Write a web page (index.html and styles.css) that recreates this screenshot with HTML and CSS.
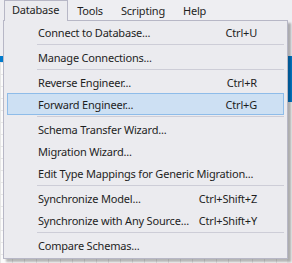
FILE: index.html
```html
<!DOCTYPE html>
<html lang="en">
<head>
  <meta charset="UTF-8" />
  <title>Database menu</title>
  <link rel="stylesheet" href="styles.css">
</head>
<body>

  <div class="menubar">
    <div class="menu-title open">Database</div>
    <div class="menu-title">Tools</div>
    <div class="menu-title">Scripting</div>
    <div class="menu-title">Help</div>
  </div>
  <div class="toolbar"></div>
  <div class="docbar"></div>
  <div class="workspace">
    <div class="canvas"></div>
    <div class="side"><div class="side-top"></div></div>
  </div>

  <div class="dropdown">
    <div class="item"><span>Connect to Database...</span><span class="key">Ctrl+U</span></div>
    <div class="sep"></div>
    <div class="item"><span>Manage Connections...</span></div>
    <div class="sep"></div>
    <div class="item"><span>Reverse Engineer...</span><span class="key">Ctrl+R</span></div>
    <div class="item active"><span>Forward Engineer...</span><span class="key">Ctrl+G</span></div>
    <div class="sep"></div>
    <div class="item"><span>Schema Transfer Wizard...</span></div>
    <div class="item"><span>Migration Wizard...</span></div>
    <div class="item"><span>Edit Type Mappings for Generic Migration...</span></div>
    <div class="sep"></div>
    <div class="item"><span>Synchronize Model...</span><span class="key">Ctrl+Shift+Z</span></div>
    <div class="item"><span>Synchronize with Any Source...</span><span class="key">Ctrl+Shift+Y</span></div>
    <div class="sep"></div>
    <div class="item"><span>Compare Schemas...</span></div>
  </div>

</body>
</html>
```

FILE: styles.css
```css
body {
  margin: 0;
  width: 292px;
  height: 263px;
  overflow: hidden;
  display: flex;
  flex-direction: column;
  background-color: #eeeef2;
  font-family: "Noto Sans", "Open Sans", sans-serif;
  font-size: 11px;
  letter-spacing: -0.2px;
  color: #1e1e1e;
}
.menubar {
  height: 20px;
  display: flex;
  align-items: flex-end;
  padding-left: 4px;
}
.menu-title {
  height: 19px;
  line-height: 18px;
  padding: 0 8px;
  border: 1px solid transparent;
  border-bottom: none;
  box-sizing: border-box;
}
.menu-title.open {
  position: relative;
  z-index: 3;
  height: 21px;
  margin-bottom: -1px;
  padding: 0 8px 0 7px;
  background-color: #ebebef;
  border-color: #b7b7c6;
}
.toolbar {
  height: 36px;
}
.docbar {
  height: 6px;
  background-color: #007acc;
}
.workspace {
  flex: 1;
  display: flex;
}
.canvas {
  flex: 1;
  background-color: #fbfbfb;
  background-image:
    linear-gradient(to right, #e6e6e6 1px, transparent 1px),
    linear-gradient(to bottom, #e6e6e6 1px, transparent 1px);
  background-size: 12px 12px;
}
.side {
  width: 5px;
  background-color: #f0f0f0;
}
.side-top {
  height: 40px;
  background-color: #007acc;
}
.dropdown {
  position: absolute;
  left: 3px;
  top: 20px;
  width: 285px;
  height: 239px;
  box-sizing: border-box;
  border: 1px solid #b7b7c6;
  background-color: #ebebef;
  box-shadow: 3px 3px 2px rgba(0, 0, 0, 0.28);
  z-index: 2;
}
.item {
  height: 22px;
  margin: 0 3px;
  padding: 0 26px 0 30px;
  border: 1px solid transparent;
  box-sizing: border-box;
  display: flex;
  align-items: center;
  justify-content: space-between;
  white-space: nowrap;
}
.item.active {
  background-color: #cde0f3;
  border-color: #8ebce9;
}
.sep {
  height: 1px;
  margin: 1px 3px 1px 33px;
  background-color: #cdcdd7;
}
```
